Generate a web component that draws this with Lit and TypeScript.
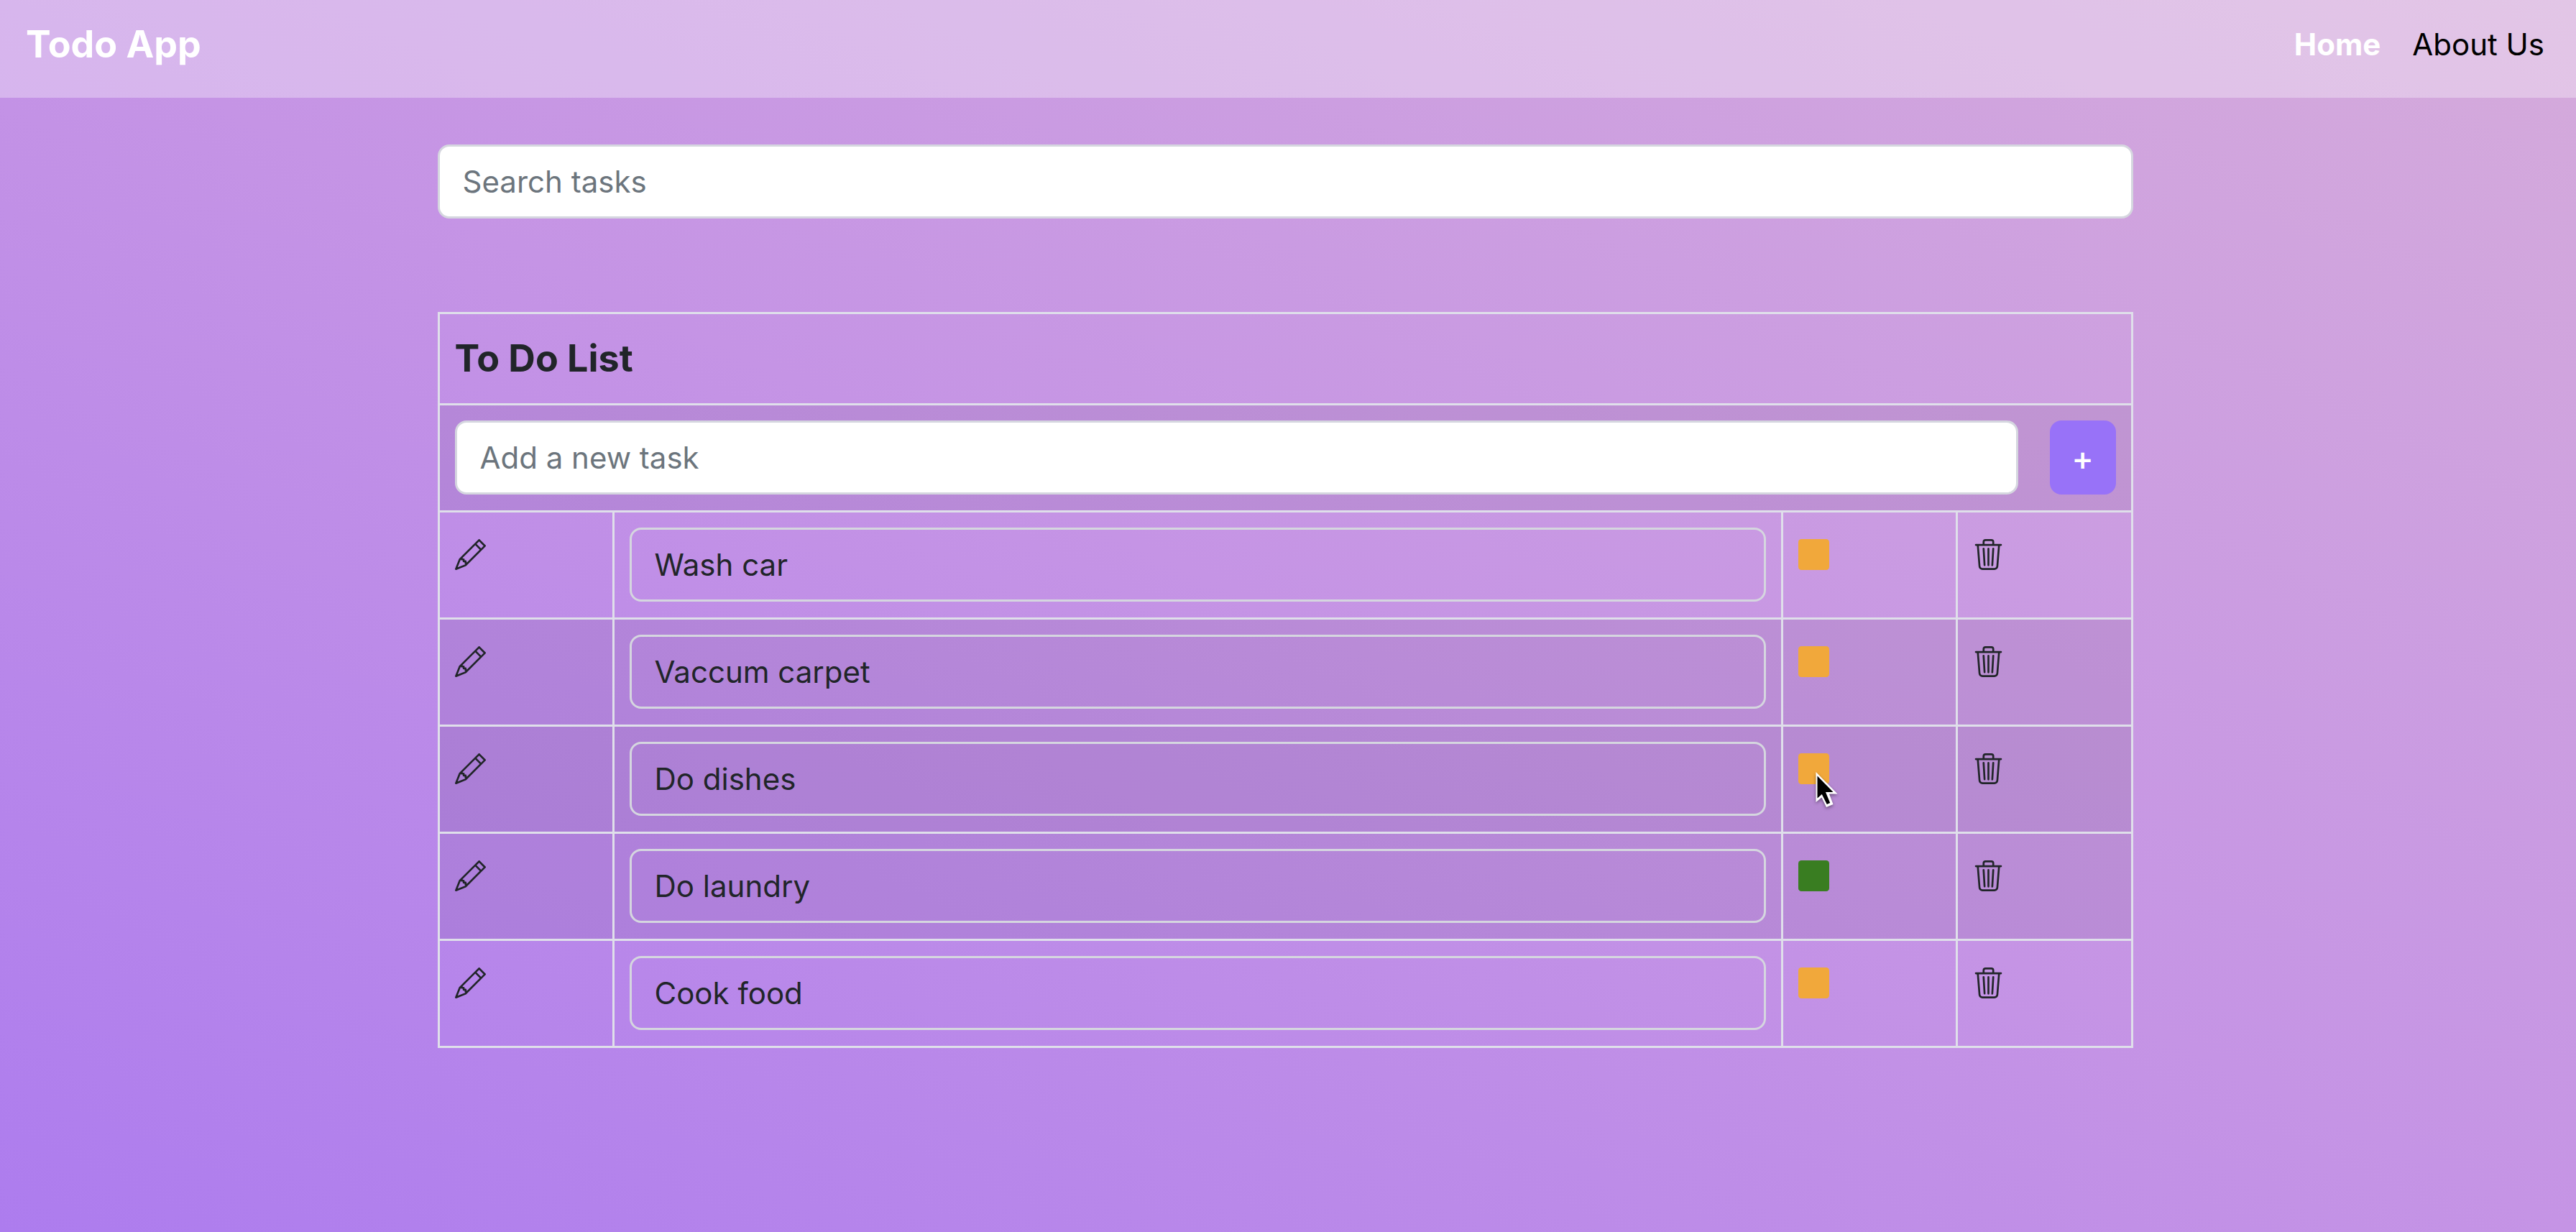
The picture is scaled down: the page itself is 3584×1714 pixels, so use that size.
import { LitElement, html, css, svg } from "lit";
import { customElement, property, state } from "lit/decorators.js";
import { classMap } from "lit/directives/class-map.js";

interface Task {
  id: number;
  title: string;
  done: boolean;
}

const pencilIcon = svg`<path d="M12.146.146a.5.5 0 0 1 .708 0l3 3a.5.5 0 0 1 0 .708l-10 10a.5.5 0 0 1-.168.11l-5 2a.5.5 0 0 1-.65-.65l2-5a.5.5 0 0 1 .11-.168zM11.207 2.5 13.5 4.793 14.793 3.5 12.5 1.207zm1.586 3L10.5 3.207 4 9.707V10h.5a.5.5 0 0 1 .5.5v.5h.5a.5.5 0 0 1 .5.5v.5h.293zm-9.761 5.175-.106.106-1.528 3.821 3.821-1.528.106-.106A.5.5 0 0 1 5 12.5V12h-.5a.5.5 0 0 1-.5-.5V11h-.5a.5.5 0 0 1-.468-.325"/>`;

const trashIcon = svg`<path d="M6.5 1h3a.5.5 0 0 1 .5.5v1H6v-1a.5.5 0 0 1 .5-.5M11 2.5v-1A1.5 1.5 0 0 0 9.5 0h-3A1.5 1.5 0 0 0 5 1.5v1H1.5a.5.5 0 0 0 0 1h.538l.853 10.66A2 2 0 0 0 4.885 16h6.23a2 2 0 0 0 1.994-1.84l.853-10.66h.538a.5.5 0 0 0 0-1zm1.958 1-.846 10.58a1 1 0 0 1-.997.92h-6.23a1 1 0 0 1-.997-.92L3.042 3.5zm-7.487 1a.5.5 0 0 1 .528.47l.5 8.5a.5.5 0 0 1-.998.06L5 5.03a.5.5 0 0 1 .47-.53Zm5.058 0a.5.5 0 0 1 .47.53l-.5 8.5a.5.5 0 1 1-.998-.06l.5-8.5a.5.5 0 0 1 .528-.47M8 4.5a.5.5 0 0 1 .5.5v8.5a.5.5 0 0 1-1 0V5a.5.5 0 0 1 .5-.5"/>`;

@customElement("app-nav")
export class AppNav extends LitElement {
  static styles = css`
    :host {
      display: block;
    }
    .bar {
      display: flex;
      align-items: center;
      justify-content: space-between;
      box-sizing: border-box;
      padding: 22px 44px 34px 36px;
      background: rgba(255, 255, 255, 0.32);
    }
    .brand,
    .link {
      text-decoration: none;
      line-height: 80px;
    }
    .brand {
      color: #fff;
      font-size: 52px;
      font-weight: 700;
    }
    .links {
      display: flex;
      gap: 44px;
    }
    .link {
      color: #000;
      font-size: 42px;
    }
    .link.active {
      color: #fff;
      font-weight: 700;
    }
  `;

  render() {
    return html`
      <nav class="bar">
        <a class="brand" href="#">Todo App</a>
        <div class="links">
          <a class="link active" href="#" aria-current="page">Home</a>
          <a class="link" href="#about">About Us</a>
        </div>
      </nav>
    `;
  }
}

@customElement("task-table")
export class TaskTable extends LitElement {
  @property({ attribute: false }) tasks: Task[] = [];
  @property({ type: Number }) hovered = 0;

  static styles = css`
    :host {
      display: block;
    }
    .table {
      width: 100%;
      table-layout: fixed;
      border-collapse: collapse;
      color: #212529;
    }
    .narrow {
      width: 243px;
    }
    .cell {
      padding: 21px 21px 22px;
      border: 3px solid #dfdfea;
      text-align: left;
      vertical-align: top;
    }
    .title {
      font-size: 52px;
      font-weight: 700;
      line-height: 81px;
    }
    .striped {
      background: rgba(0, 0, 0, 0.06);
    }
    .hovered {
      background: rgba(0, 0, 0, 0.08);
    }
    .add {
      display: flex;
      gap: 44px;
    }
    .field {
      flex: 1;
      display: block;
      box-sizing: border-box;
      width: 100%;
      min-width: 0;
      height: 103px;
      margin: 0;
      padding: 0 32px;
      border: 3px solid #d5d6df;
      border-radius: 16px;
      background: #fff;
      color: #212529;
      font: inherit;
      font-size: 42px;
    }
    .field::placeholder {
      color: #6c757d;
      opacity: 1;
    }
    .field.clear {
      background: transparent;
    }
    .plus {
      box-sizing: border-box;
      width: 92px;
      height: 103px;
      padding: 0;
      border: 0;
      border-radius: 16px;
      background: #9872f8;
      color: #fff;
      font: inherit;
      font-size: 46px;
      font-weight: 500;
    }
    .icon-button {
      position: relative;
      display: block;
      margin: 16px 0 0;
      padding: 0;
      border: 0;
      background: none;
      color: #212529;
    }
    .icon {
      display: block;
      width: 43px;
      height: 43px;
      fill: currentColor;
    }
    .todo {
      color: #f1a83b;
    }
    .done {
      color: #397d21;
    }
    .pointer {
      position: absolute;
      left: 20px;
      top: 22px;
      width: 42px;
      height: 58px;
      filter: drop-shadow(0 2px 2px rgba(0, 0, 0, 0.4));
    }
  `;

  private renderRow(task: Task, index: number) {
    const hovered = task.id === this.hovered;
    const rowClass = classMap({ hovered, striped: !hovered && index % 2 === 1 });
    return html`
      <tr class=${rowClass}>
        <td class="cell">
          <button class="icon-button" type="button" aria-label="Edit">
            <svg class="icon" viewBox="0 0 16 16">${pencilIcon}</svg>
          </button>
        </td>
        <td class="cell">
          <input class="field clear" type="text" aria-label="Task" readonly .value=${task.title} />
        </td>
        <td class="cell">
          <button
            class="icon-button ${task.done ? "done" : "todo"}"
            type="button"
            aria-label="Toggle status"
          >
            <svg class="icon" viewBox="0 0 16 16"><rect width="16" height="16" rx="1.6" /></svg>
            ${hovered
              ? html`<svg class="pointer" viewBox="0 0 42 58">
                  <path d="M4.500 4V46L12.500 39.500L19 53L28.500 49L23 34.500H34.500Z" fill="#fff" />
                  <path d="M6.500 9.500V40.500L12.800 35L19.800 49L24.200 47L18 32H28.500Z" fill="#000" />
                </svg>`
              : null}
          </button>
        </td>
        <td class="cell">
          <button class="icon-button" type="button" aria-label="Delete">
            <svg class="icon" viewBox="0 0 16 16">${trashIcon}</svg>
          </button>
        </td>
      </tr>
    `;
  }

  render() {
    return html`
      <table class="table">
        <colgroup>
          <col class="narrow" />
          <col />
          <col class="narrow" />
          <col class="narrow" />
        </colgroup>
        <thead>
          <tr>
            <th class="cell title" colspan="4">To Do List</th>
          </tr>
        </thead>
        <tbody>
          <tr class="striped">
            <td class="cell" colspan="4">
              <div class="add">
                <input class="field" type="text" placeholder="Add a new task" aria-label="Add a new task" />
                <button class="plus" type="button" aria-label="Add">+</button>
              </div>
            </td>
          </tr>
          ${this.tasks.map((task, index) => this.renderRow(task, index))}
        </tbody>
      </table>
    `;
  }
}

@customElement("app-root")
export class AppRoot extends LitElement {
  @state() private tasks: Task[] = [
    { id: 1, title: "Wash car", done: false },
    { id: 2, title: "Vaccum carpet", done: false },
    { id: 3, title: "Do dishes", done: false },
    { id: 4, title: "Do laundry", done: true },
    { id: 5, title: "Cook food", done: false },
  ];

  static styles = css`
    :host {
      display: block;
      min-height: 100vh;
      background: linear-gradient(to top right, #ad7cee, #c594e5 50%, #d5abdb);
      font-family: Inter, "Liberation Sans", sans-serif;
    }
    .content {
      padding: 65px 8px 65px 0;
    }
    .container {
      display: flex;
      flex-direction: column;
      gap: 130px;
      width: 90%;
      max-width: 2359px;
      margin: 0 auto;
    }
    .search {
      box-sizing: border-box;
      width: 100%;
      height: 103px;
      margin: 0;
      padding: 0 32px;
      border: 3px solid #d5d6df;
      border-radius: 16px;
      background: #fff;
      color: #212529;
      font: inherit;
      font-size: 42px;
    }
    .search::placeholder {
      color: #6c757d;
      opacity: 1;
    }
  `;

  render() {
    return html`
      <app-nav></app-nav>
      <main class="content">
        <div class="container">
          <input class="search" type="search" placeholder="Search tasks" aria-label="Search tasks" />
          <task-table .tasks=${this.tasks} .hovered=${3}></task-table>
        </div>
      </main>
    `;
  }
}
